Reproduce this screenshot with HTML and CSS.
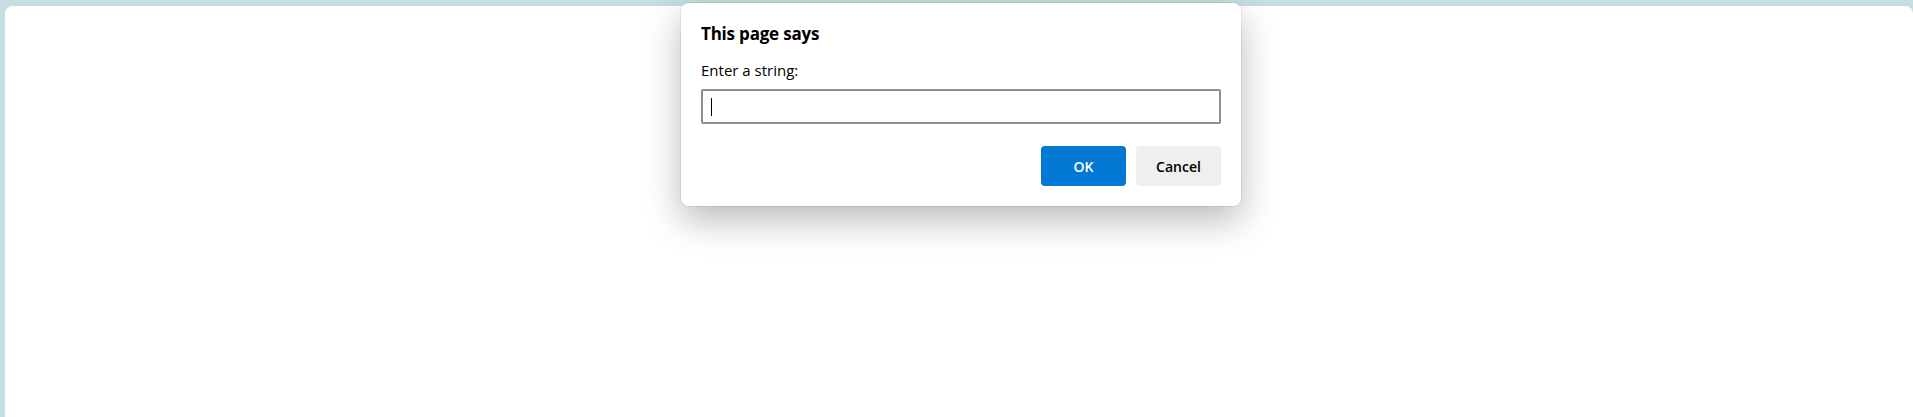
FILE: index.html
```html
<!DOCTYPE html>
<html lang="en">
<head>
<meta charset="utf-8">
<title>Prompt</title>
<link rel="stylesheet" href="styles.css">
</head>
<body>
<main class="page"></main>
<div class="dialog" role="dialog">
  <h1 class="dialog-title">This page says</h1>
  <label class="dialog-label" for="answer">Enter a string:</label>
  <div class="dialog-input"><span class="caret"></span></div>
  <div class="dialog-actions">
    <button class="btn btn-primary">OK</button>
    <button class="btn btn-secondary">Cancel</button>
  </div>
</div>
</body>
</html>
```

FILE: styles.css
```css
html, body {
  margin: 0;
  height: 100%;
}
body {
  background: #c6dee1;
  display: flex;
  flex-direction: column;
  padding: 6px 0 0 5px;
  box-sizing: border-box;
  font-family: "Open Sans", "Noto Sans", sans-serif;
  color: #000;
  overflow: hidden;
}
.page {
  flex: 1;
  background: #fff;
  border-radius: 8px 8px 0 0;
}
.dialog {
  position: absolute;
  left: 681px;
  top: 3px;
  width: 560px;
  box-sizing: border-box;
  padding: 20px 20px 20px 20px;
  background: #fff;
  border-radius: 8px;
  box-shadow: 0 0 0 1px rgba(0,0,0,0.06), 0 14px 36px rgba(0,0,0,0.28);
}
.dialog-title {
  margin: 0;
  font-size: 17px;
  font-weight: 700;
  line-height: 22px;
  letter-spacing: -0.2px;
}
.dialog-label {
  display: block;
  margin-top: 15px;
  font-size: 15px;
  line-height: 20px;
}
.dialog-input {
  margin-top: 9px;
  height: 35px;
  box-sizing: border-box;
  border: 2px solid #8b9096;
  border-radius: 2px;
  display: flex;
  align-items: center;
  padding-left: 8px;
}
.caret {
  width: 1px;
  height: 18px;
  background: #000;
}
.dialog-actions {
  display: flex;
  justify-content: flex-end;
  gap: 10px;
  margin-top: 22px;
}
.btn {
  width: 85px;
  height: 40px;
  border: none;
  border-radius: 4px;
  font-family: "Open Sans", "Noto Sans", sans-serif;
  font-size: 14px;
  font-weight: 600;
  padding: 0;
}
.btn-primary {
  background: #0078d4;
  color: #fff;
}
.btn-secondary {
  background: #efefef;
  color: #000;
}
```
